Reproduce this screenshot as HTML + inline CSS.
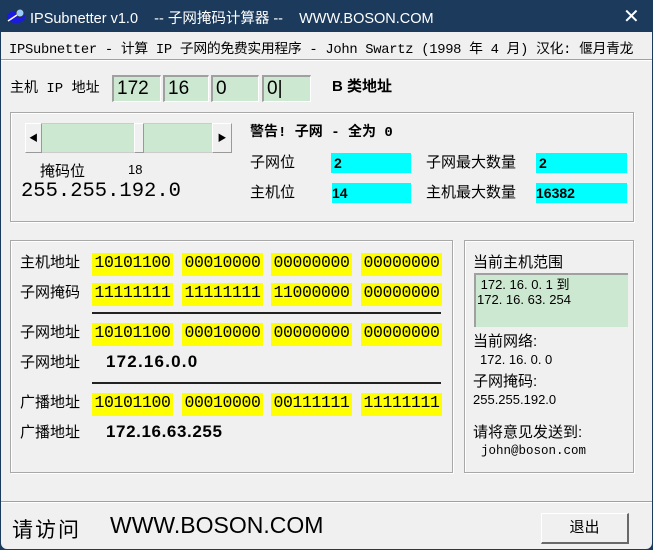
<!DOCTYPE html>
<html><head><meta charset="utf-8"><style>
*{margin:0;padding:0;box-sizing:border-box}
body{width:653px;height:550px;overflow:hidden;background:#1b3a5c;font-family:"Liberation Sans","Noto Sans CJK SC",sans-serif;position:relative}
.a{position:absolute;white-space:nowrap}
.win{position:absolute;left:1px;top:32px;width:651px;height:517px;background:#f0f0f0;border-radius:0 0 6px 6px}
.mono{font-family:"Liberation Mono","Noto Sans CJK SC",monospace}
.ip{position:absolute;top:75px;height:27px;background:#cde8d0;border-top:2px solid #a0a0a0;border-left:2px solid #a0a0a0;border-bottom:1px solid #fff;border-right:1px solid #fff;font-size:19px;padding-left:3px;line-height:23px}
.grp{position:absolute;border:1px solid #a8a8a8;box-shadow:inset 1px 1px 0 #fff,1px 1px 0 #fff}
.cy{position:absolute;background:#00ffff;height:20px;font-weight:bold;font-size:14px;line-height:20px;padding-left:3px}
.yl{position:absolute;background:#ffff00;width:81px;height:23px;font-size:16.5px;line-height:20px;text-align:center;font-family:"Liberation Mono",monospace;letter-spacing:-0.4px}
.lb{font-size:15px}
.hr{position:absolute;left:92px;width:349px;height:2px;background:#222}
</style></head><body>
<svg class="a" style="left:6px;top:7px" width="20" height="18" viewBox="0 0 20 18"><ellipse cx="10" cy="10" rx="9" ry="6" fill="#1a1ae0"/><circle cx="14" cy="6" r="4" fill="#9cf" stroke="#333"/><line x1="2" y1="14" x2="11" y2="8" stroke="#fff" stroke-width="1.5"/></svg>
<div class="a" style="left:30px;top:7px;color:#fff;font-size:14.5px">IPSubnetter v1.0 &nbsp;&nbsp; -- 子网掩码计算器 -- &nbsp;&nbsp; WWW.BOSON.COM</div>
<div class="a" style="left:623px;top:4px;color:#fff;font-size:20px;font-weight:300">✕</div>
<div class="win"></div>
<div class="a mono" style="left:9px;top:37px;font-size:13.8px;letter-spacing:-0.29px">IPSubnetter - 计算 IP 子网的免费实用程序 - John Swartz (1998 年 4 月) 汉化: 偃月青龙</div>
<div class="a" style="left:1px;top:59px;width:651px;height:1px;background:#a0a0a0"></div>
<div class="a" style="left:1px;top:60px;width:651px;height:1px;background:#fff"></div>
<div class="a mono" style="left:10px;top:77px;font-size:14px">主机 IP 地址</div>
<div class="ip" style="left:112px;width:49px">172</div>
<div class="ip" style="left:163px;width:46px">16</div>
<div class="ip" style="left:211px;width:48px">0</div>
<div class="ip" style="left:262px;width:49px">0|</div>
<div class="a" style="left:332px;top:75px;font-size:15px;font-weight:bold">B 类地址</div>

<div class="grp" style="left:10px;top:112px;width:624px;height:110px"></div>
<div class="a" style="left:25px;top:123px;width:207px;height:30px;background:#cde8d0;border:1px solid #ccc"></div>
<div class="a" style="left:25px;top:123px;width:17px;height:30px;background:#f0f0f0;border:1px solid #fff;border-right-color:#999;border-bottom-color:#999;font-size:9px;line-height:28px;text-align:center">◀</div>
<div class="a" style="left:134px;top:123px;width:10px;height:30px;background:#f0f0f0;border:1px solid #fff;border-right-color:#999;border-bottom-color:#999"></div>
<div class="a" style="left:212px;top:123px;width:20px;height:30px;background:#f0f0f0;border:1px solid #fff;border-right-color:#999;border-bottom-color:#999;font-size:9px;line-height:28px;text-align:center">▶</div>
<div class="a" style="left:40px;top:160px;font-size:15px">掩码位</div>
<div class="a" style="left:128px;top:162px;font-size:13px">18</div>
<div class="a mono" style="left:21px;top:180px;font-size:20.5px">255.255.192.0</div>
<div class="a mono" style="left:250px;top:121px;font-size:14px;font-weight:bold">警告! 子网 - 全为 0</div>
<div class="a lb" style="left:250px;top:151px">子网位</div>
<div class="cy" style="left:331px;top:153px;width:80px">2</div>
<div class="a lb" style="left:426px;top:151px">子网最大数量</div>
<div class="cy" style="left:536px;top:153px;width:91px">2</div>
<div class="a lb" style="left:250px;top:181px">主机位</div>
<div class="cy" style="left:332px;top:183px;width:79px;padding-left:0">14</div>
<div class="a lb" style="left:426px;top:181px">主机最大数量</div>
<div class="cy" style="left:536px;top:183px;width:91px;padding-left:0">16382</div>

<div class="grp" style="left:10px;top:240px;width:443px;height:233px"></div>
<div class="grp" style="left:464px;top:240px;width:170px;height:233px"></div>
<div class="a lb" style="left:20px;top:251px">主机地址</div>
<div class="yl" style="left:92px;top:253px">10101100</div><div class="yl" style="left:182px;top:253px">00010000</div><div class="yl" style="left:271px;top:253px">00000000</div><div class="yl" style="left:361px;top:253px">00000000</div>
<div class="a lb" style="left:20px;top:281px">子网掩码</div>
<div class="yl" style="left:92px;top:283px">11111111</div><div class="yl" style="left:182px;top:283px">11111111</div><div class="yl" style="left:271px;top:283px">11000000</div><div class="yl" style="left:361px;top:283px">00000000</div>
<div class="hr" style="top:312px"></div>
<div class="a lb" style="left:20px;top:321px">子网地址</div>
<div class="yl" style="left:92px;top:323px">10101100</div><div class="yl" style="left:182px;top:323px">00010000</div><div class="yl" style="left:271px;top:323px">00000000</div><div class="yl" style="left:361px;top:323px">00000000</div>
<div class="a lb" style="left:20px;top:351px">子网地址</div>
<div class="a" style="left:106px;top:352px;font-size:17px;font-weight:bold;letter-spacing:1.2px">172.16.0.0</div>
<div class="hr" style="top:382px"></div>
<div class="a lb" style="left:20px;top:391px">广播地址</div>
<div class="yl" style="left:92px;top:393px">10101100</div><div class="yl" style="left:182px;top:393px">00010000</div><div class="yl" style="left:271px;top:393px">00111111</div><div class="yl" style="left:361px;top:393px">11111111</div>
<div class="a lb" style="left:20px;top:421px">广播地址</div>
<div class="a" style="left:106px;top:422px;font-size:17px;font-weight:bold;letter-spacing:0.6px">172.16.63.255</div>

<div class="a lb" style="left:473px;top:251px">当前主机范围</div>
<div class="a" style="left:474px;top:273px;width:154px;height:54px;background:#cde8d0;border-top:2px solid #a0a0a0;border-left:2px solid #a0a0a0;font-size:13px;line-height:15px;padding:2px 0 0 1px;white-space:pre"> 172. 16. 0. 1 到
172. 16. 63. 254</div>
<div class="a lb" style="left:473px;top:330px">当前网络:</div>
<div class="a" style="left:480px;top:352px;font-size:13px">172. 16. 0. 0</div>
<div class="a lb" style="left:473px;top:370px">子网掩码:</div>
<div class="a" style="left:473px;top:392px;font-size:13px">255.255.192.0</div>
<div class="a lb" style="left:473px;top:421px">请将意见发送到:</div>
<div class="a mono" style="left:481px;top:444px;font-size:12.5px">john@boson.com</div>

<div class="a" style="left:1px;top:501px;width:651px;height:1px;background:#a0a0a0"></div>
<div class="a" style="left:1px;top:502px;width:651px;height:1px;background:#fff"></div>
<div class="a" style="left:12px;top:514px;font-size:21px;letter-spacing:2px">请访问</div>
<div class="a" style="left:110px;top:512px;font-size:23px">WWW.BOSON.COM</div>
<div class="a" style="left:541px;top:513px;width:88px;height:31px;background:#f0f0f0;border:1px solid #fff;border-right:2px solid #696969;border-bottom:2px solid #696969;font-size:15px;line-height:28px;text-align:center">退出</div>
</body></html>
